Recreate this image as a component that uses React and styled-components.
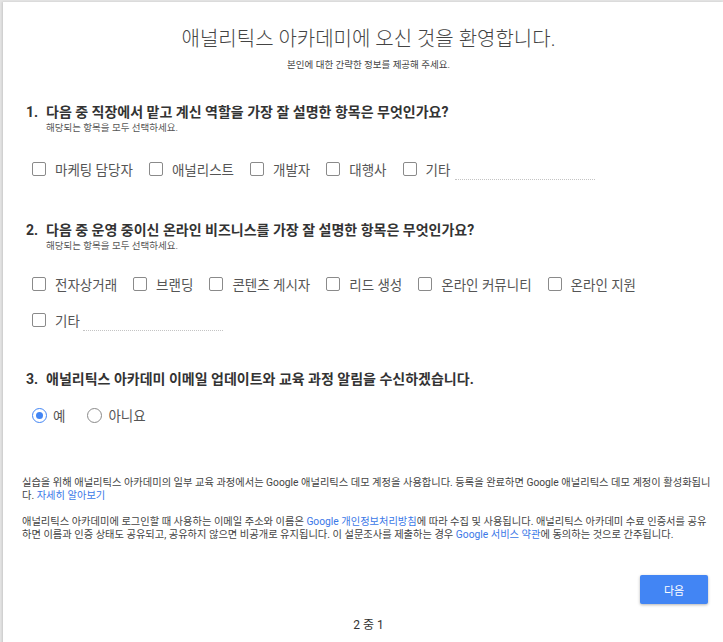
import React from 'react';
import styled, { createGlobalStyle } from 'styled-components';

const GlobalStyle = createGlobalStyle`
  html, body {
    margin: 0;
    padding: 0;
    background: #e4e4e4;
    overflow: hidden;
  }
  body {
    font-family: Roboto, "Noto Sans CJK KR", sans-serif;
    color: #333;
  }
`;

const Card = styled.div`
  margin: 2px 0 0 3px;
  min-height: 660px;
  background: #fff;
  box-shadow: -1px 0 2px rgba(0, 0, 0, 0.12);
  padding: 0 8px 0 19px;
  box-sizing: border-box;
`;

const Header = styled.header`
  text-align: center;
  padding-top: 25px;
`;

const Title = styled.h1`
  margin: 0;
  font-size: 20px;
  line-height: 24px;
  font-weight: 300;
  color: #444;
`;

const Subtitle = styled.p`
  margin: 7px 0 0;
  font-size: 9.5px;
  line-height: 14px;
  color: #444;
`;

const Question = styled.section`
  margin-top: ${p => p.$top}px;
  padding-left: 4px;
`;

const QTitle = styled.h2`
  margin: 0;
  display: flex;
  font-size: 14px;
  line-height: 18px;
  font-weight: 700;
  color: #333;
`;

const Num = styled.span`
  width: 20px;
`;

const Hint = styled.p`
  margin: 0 0 0 20px;
  font-size: 9.5px;
  line-height: 14px;
  color: #555;
`;

const Options = styled.div`
  display: flex;
  flex-wrap: wrap;
  align-items: center;
  row-gap: 16px;
  margin-top: ${p => p.$top}px;
  padding-left: 6px;
`;

const Option = styled.label`
  display: flex;
  align-items: center;
  height: 20px;
  margin-right: ${p => p.$gap ?? 16}px;
  font-size: 13.5px;
  color: #555;
`;

const Box = styled.span`
  width: 14px;
  height: 14px;
  box-sizing: border-box;
  border: 1.5px solid #8a8a8a;
  border-radius: 2px;
  margin-right: 9px;
`;

const Radio = styled.span`
  width: 15px;
  height: 15px;
  box-sizing: border-box;
  border-radius: 50%;
  border: 1.5px solid ${p => (p.$on ? '#4285f4' : '#8a8a8a')};
  margin-right: 6px;
  display: flex;
  align-items: center;
  justify-content: center;
  &::after {
    content: '';
    width: 7px;
    height: 7px;
    border-radius: 50%;
    background: ${p => (p.$on ? '#4285f4' : 'transparent')};
  }
`;

const OtherField = styled.span`
  width: 140px;
  height: 22px;
  box-sizing: border-box;
  margin-left: ${p => p.$offset}px;
  border-bottom: 1px dotted #c4c4c4;
`;

const Notes = styled.div`
  margin-top: 52px;
  font-size: 10.25px;
  line-height: 12.5px;
  color: #444;
`;

const Note = styled.p`
  margin: 0 0 14px;
`;

const Link = styled.a`
  display: inline-block;
  color: #3b78e7;
  text-decoration: none;
`;

const Actions = styled.div`
  display: flex;
  justify-content: flex-end;
  margin-top: 34px;
  padding-right: 7px;
`;

const NextButton = styled.button`
  width: 68px;
  height: 29px;
  padding: 0;
  border: none;
  border-radius: 2px;
  background: #4285f4;
  color: #fff;
  font-family: inherit;
  font-size: 11px;
  box-shadow: 0 1px 3px rgba(0, 0, 0, 0.3);
`;

const Pager = styled.div`
  text-align: center;
  margin-top: 13px;
  font-size: 12px;
  line-height: 16px;
  color: #333;
`;

const roles = ['마케팅 담당자', '애널리스트', '개발자', '대행사'];
const businesses = ['전자상거래', '브랜딩', '콘텐츠 게시자', '리드 생성', '온라인 커뮤니티', '온라인 지원'];

export default function App() {
  return (
    <>
      <GlobalStyle />
      <Card>
        <Header>
          <Title>애널리틱스 아카데미에 오신 것을 환영합니다.</Title>
          <Subtitle>본인에 대한 간략한 정보를 제공해 주세요.</Subtitle>
        </Header>

        <Question $top={31}>
          <QTitle><Num>1.</Num>다음 중 직장에서 맡고 계신 역할을 가장 잘 설명한 항목은 무엇인가요?</QTitle>
          <Hint>해당되는 항목을 모두 선택하세요.</Hint>
          <Options $top={24}>
            {roles.map(r => (
              <Option key={r}><Box />{r}</Option>
            ))}
            <Option><Box />기타<OtherField $offset={5} /></Option>
          </Options>
        </Question>

        <Question $top={42}>
          <QTitle><Num>2.</Num>다음 중 운영 중이신 온라인 비즈니스를 가장 잘 설명한 항목은 무엇인가요?</QTitle>
          <Hint>해당되는 항목을 모두 선택하세요.</Hint>
          <Options $top={21}>
            {businesses.map(b => (
              <Option key={b}><Box />{b}</Option>
            ))}
            <Option><Box />기타<OtherField $offset={3} /></Option>
          </Options>
        </Question>

        <Question $top={40}>
          <QTitle><Num>3.</Num>애널리틱스 아카데미 이메일 업데이트와 교육 과정 알림을 수신하겠습니다.</QTitle>
          <Options $top={17}>
            <Option $gap={22}><Radio $on />예</Option>
            <Option $gap={22}><Radio />아니요</Option>
          </Options>
        </Question>

        <Notes>
          <Note>
            실습을 위해 애널리틱스 아카데미의 일부 교육 과정에서는 Google 애널리틱스 데모 계정을 사용합니다. 등록을 완료하면 Google 애널리틱스 데모 계정이 활성화됩니다. <Link href="#">자세히 알아보기</Link>
          </Note>
          <Note>
            애널리틱스 아카데미에 로그인할 때 사용하는 이메일 주소와 이름은 <Link href="#">Google 개인정보처리방침</Link>에 따라 수집 및 사용됩니다. 애널리틱스 아카데미 수료 인증서를 공유하면 이름과 인증 상태도 공유되고, 공유하지 않으면 비공개로 유지됩니다. 이 설문조사를 제출하는 경우 <Link href="#">Google 서비스 약관</Link>에 동의하는 것으로 간주됩니다.
          </Note>
        </Notes>

        <Actions>
          <NextButton>다음</NextButton>
        </Actions>
        <Pager>2 중 1</Pager>
      </Card>
    </>
  );
}
